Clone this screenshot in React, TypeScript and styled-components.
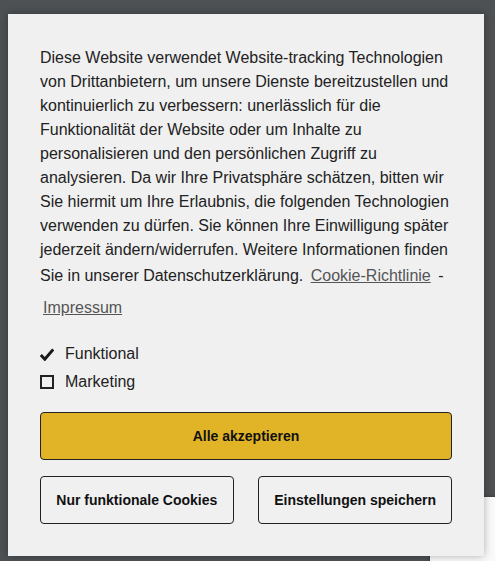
import React from "react";
import styled, { createGlobalStyle } from "styled-components";

const GlobalStyle = createGlobalStyle`
  html, body {
    margin: 0;
    padding: 0;
    background: #4d5154;
    font-family: "Liberation Sans", Arial, sans-serif;
  }
`;

const Page = styled.div`
  position: relative;
  width: 495px;
  height: 561px;
  overflow: hidden;
  background: #4d5154;
  padding: 14px 11px 0 8px;
  box-sizing: border-box;
`;

const Badge = styled.div`
  position: absolute;
  right: -10px;
  bottom: -10px;
  width: 75px;
  height: 74px;
  background: #f9f9f9;
  box-shadow: 0 0 4px rgba(0, 0, 0, 0.35);
`;

const Modal = styled.div`
  position: relative;
  z-index: 1;
  background: #f0f0f0;
  padding: 32px;
  box-shadow: 0 0 8px rgba(0, 0, 0, 0.3);
`;

const Text = styled.p`
  margin: 0;
  font-size: 16px;
  line-height: 24px;
  color: #222;
`;

const Link = styled.a`
  display: inline-block;
  margin: 2px 3px 6px;
  color: #555;
  text-decoration: underline;
  cursor: pointer;
`;

const Options = styled.div`
  display: flex;
  flex-direction: column;
  gap: 4px;
  margin-top: 16px;
`;

const Option = styled.label`
  display: flex;
  align-items: center;
  gap: 11px;
  font-size: 16px;
  line-height: 24px;
  color: #222;
`;

const Box = styled.span<{ $checked?: boolean }>`
  display: inline-flex;
  align-items: center;
  justify-content: center;
  width: 14px;
  height: 14px;
  box-sizing: border-box;
  border: ${(p) => (p.$checked ? "none" : "2px solid #222")};
`;

const Buttons = styled.div`
  display: flex;
  flex-direction: column;
  gap: 16px;
  margin-top: 18px;
`;

const Row = styled.div`
  display: flex;
  justify-content: space-between;
`;

const Button = styled.button<{ $primary?: boolean; $half?: boolean }>`
  height: 48px;
  width: ${(p) => (p.$half ? "47%" : "100%")};
  border: 1px solid #222;
  border-radius: 4px;
  background: ${(p) => (p.$primary ? "#e1b427" : "transparent")};
  font-family: "Liberation Sans", Arial, sans-serif;
  font-weight: bold;
  font-size: 14px;
  color: #111;
  cursor: pointer;
`;

function Check() {
  return (
    <svg width="14" height="13" viewBox="0 0 14 13">
      <path d="M0.8 7 L4.8 11.2 L13.2 1.4" fill="none" stroke="#1a1a1a" strokeWidth="3" />
    </svg>
  );
}

export default function App() {
  return (
    <Page>
      <GlobalStyle />
      <Badge />
      <Modal>
        <Text>
          Diese Website verwendet Website-tracking Technologien von Drittanbietern, um
          unsere Dienste bereitzustellen und kontinuierlich zu verbessern: unerlässlich
          für die Funktionalität der Website oder um Inhalte zu personalisieren und den
          persönlichen Zugriff zu analysieren. Da wir Ihre Privatsphäre schätzen, bitten
          wir Sie hiermit um Ihre Erlaubnis, die folgenden Technologien verwenden zu
          dürfen. Sie können Ihre Einwilligung später jederzeit ändern/widerrufen.
          Weitere Informationen finden Sie in unserer Datenschutzerklärung.{" "}
          <Link>Cookie-Richtlinie</Link> - <Link>Impressum</Link>
        </Text>
        <Options>
          <Option>
            <Box $checked>
              <Check />
            </Box>
            Funktional
          </Option>
          <Option>
            <Box />
            Marketing
          </Option>
        </Options>
        <Buttons>
          <Button $primary>Alle akzeptieren</Button>
          <Row>
            <Button $half>Nur funktionale Cookies</Button>
            <Button $half>Einstellungen speichern</Button>
          </Row>
        </Buttons>
      </Modal>
    </Page>
  );
}
